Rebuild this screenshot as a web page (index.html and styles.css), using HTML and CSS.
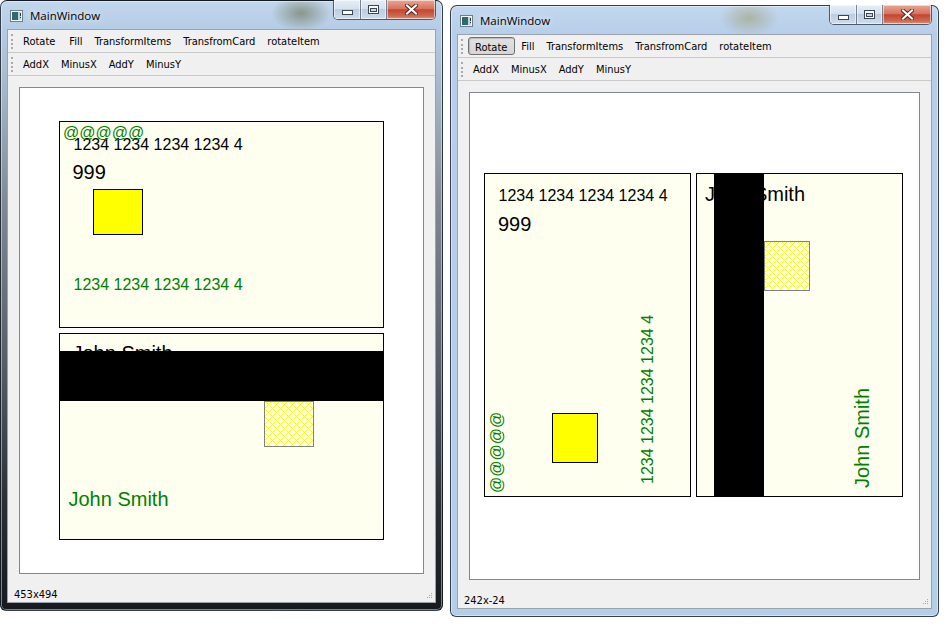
FILE: index.html
```html
<!DOCTYPE html>
<html>
<head>
<meta charset="utf-8">
<title>MainWindow</title>
<link rel="stylesheet" href="styles.css">
</head>
<body>
<div class="win win-left">
  <div class="titlebar">
    <svg class="wicon" width="13" height="12" viewBox="0 0 13 12"><rect x="0.5" y="0.5" width="12" height="11" fill="#f4f6f8" stroke="#6f7f8f"/><rect x="2" y="2" width="6" height="8" fill="#2f6b6a"/><rect x="8" y="2" width="3" height="8" fill="#b9d3e6"/><rect x="10" y="3" width="1" height="3" fill="#333"/><rect x="10" y="7" width="1" height="1" fill="#333"/></svg>
    <span class="title">MainWindow</span>
    <div class="caps">
      <span class="cap cap-min"><svg width="11" height="5" viewBox="0 0 11 5"><rect x="0.5" y="0.5" width="10" height="4" fill="#fff" stroke="#3a4656"/></svg></span>
      <span class="cap cap-max"><svg width="11" height="9" viewBox="0 0 11 9"><rect x="0.5" y="0.5" width="10" height="8" fill="#fff" stroke="#3a4656"/><rect x="2.5" y="3.5" width="6" height="3" fill="#c9d6e4" stroke="#3a4656"/></svg></span>
      <span class="cap cap-close"><svg width="13" height="11" viewBox="0 0 13 11"><path d="M2 1.5L11 9.5M11 1.5L2 9.5" stroke="#5a2a24" stroke-width="4" stroke-linecap="square"/><path d="M2 1.5L11 9.5M11 1.5L2 9.5" stroke="#fff" stroke-width="2" stroke-linecap="square"/></svg></span>
    </div>
  </div>
  <div class="client">
    <div class="toolbar"><span class="grip"></span><span class="tbtn wide">Rotate</span><span class="tbtn">Fill</span><span class="tbtn">TransformItems</span><span class="tbtn">TransfromCard</span><span class="tbtn">rotateItem</span></div>
    <div class="toolbar"><span class="grip"></span><span class="tbtn">AddX</span><span class="tbtn">MinusX</span><span class="tbtn">AddY</span><span class="tbtn">MinusY</span></div>
    <div class="central">
      <div class="view">
        <div class="card land card-l1">
          <span class="txt n16 num1">1234 1234 1234 1234 4</span>
          <span class="txt n20 cvv">999</span>
          <span class="chip chip-l"></span>
          <span class="txt n16 green num2">1234 1234 1234 1234 4</span>
          <span class="txt n16 green at">@@@@@</span>
        </div>
        <div class="card land card-l2">
          <span class="txt n20 name">John Smith</span>
          <span class="strip strip-l"></span>
          <span class="hatch hatch-l"><svg width="100%" height="100%"><defs><pattern id="dc1" width="8" height="8" patternUnits="userSpaceOnUse"><path d="M1 0h1v1H1zM5 0h1v1H5zM2 1h1v1H2zM4 1h1v1H4zM3 2h1v1H3zM2 3h1v1H2zM4 3h1v1H4zM1 4h1v1H1zM5 4h1v1H5zM0 5h1v1H0zM6 5h1v1H6zM7 6h1v1H7zM0 7h1v1H0zM6 7h1v1H6z" fill="#ffff00"/></pattern></defs><rect width="100%" height="100%" fill="url(#dc1)"/></svg></span>
          <span class="txt n20 green gname">John Smith</span>
        </div>
      </div>
    </div>
    <div class="status"><span class="stext">453x494</span><svg class="sgrip" width="7" height="7" viewBox="0 0 7 7"><g fill="#a8a8a8"><rect x="5" y="0" width="1" height="1"/><rect x="3" y="2" width="1" height="1"/><rect x="5" y="2" width="1" height="1"/><rect x="1" y="4" width="1" height="1"/><rect x="3" y="4" width="1" height="1"/><rect x="5" y="4" width="1" height="1"/></g></svg></div>
  </div>
</div>

<div class="win win-right">
  <div class="titlebar">
    <svg class="wicon" width="13" height="12" viewBox="0 0 13 12"><rect x="0.5" y="0.5" width="12" height="11" fill="#f4f6f8" stroke="#6f7f8f"/><rect x="2" y="2" width="6" height="8" fill="#2f6b6a"/><rect x="8" y="2" width="3" height="8" fill="#b9d3e6"/><rect x="10" y="3" width="1" height="3" fill="#333"/><rect x="10" y="7" width="1" height="1" fill="#333"/></svg>
    <span class="title">MainWindow</span>
    <div class="caps">
      <span class="cap cap-min"><svg width="11" height="5" viewBox="0 0 11 5"><rect x="0.5" y="0.5" width="10" height="4" fill="#fff" stroke="#3a4656"/></svg></span>
      <span class="cap cap-max"><svg width="11" height="9" viewBox="0 0 11 9"><rect x="0.5" y="0.5" width="10" height="8" fill="#fff" stroke="#3a4656"/><rect x="2.5" y="3.5" width="6" height="3" fill="#c9d6e4" stroke="#3a4656"/></svg></span>
      <span class="cap cap-close"><svg width="13" height="11" viewBox="0 0 13 11"><path d="M2 1.5L11 9.5M11 1.5L2 9.5" stroke="#5a2a24" stroke-width="4" stroke-linecap="square"/><path d="M2 1.5L11 9.5M11 1.5L2 9.5" stroke="#fff" stroke-width="2" stroke-linecap="square"/></svg></span>
    </div>
  </div>
  <div class="client">
    <div class="toolbar"><span class="grip"></span><span class="tbtn wide pressed">Rotate</span><span class="tbtn">Fill</span><span class="tbtn">TransformItems</span><span class="tbtn">TransfromCard</span><span class="tbtn">rotateItem</span></div>
    <div class="toolbar"><span class="grip"></span><span class="tbtn">AddX</span><span class="tbtn">MinusX</span><span class="tbtn">AddY</span><span class="tbtn">MinusY</span></div>
    <div class="central">
      <div class="view">
        <div class="card port card-r1">
          <span class="txt n16 num1">1234 1234 1234 1234 4</span>
          <span class="txt n20 cvv">999</span>
          <span class="chip chip-r"></span>
          <span class="txt n16 green rot rnum2">1234 1234 1234 1234 4</span>
          <span class="txt n16 green rot rat">@@@@@</span>
        </div>
        <div class="card port card-r2">
          <span class="txt n20 rname">John Smith</span>
          <span class="strip strip-r"></span>
          <span class="hatch hatch-r"><svg width="100%" height="100%"><defs><pattern id="dc2" width="8" height="8" patternUnits="userSpaceOnUse"><path d="M1 0h1v1H1zM5 0h1v1H5zM2 1h1v1H2zM4 1h1v1H4zM3 2h1v1H3zM2 3h1v1H2zM4 3h1v1H4zM1 4h1v1H1zM5 4h1v1H5zM0 5h1v1H0zM6 5h1v1H6zM7 6h1v1H7zM0 7h1v1H0zM6 7h1v1H6z" fill="#ffff00"/></pattern></defs><rect width="100%" height="100%" fill="url(#dc2)"/></svg></span>
          <span class="txt n20 green rot rgname">John Smith</span>
        </div>
      </div>
    </div>
    <div class="status"><span class="stext">242x-24</span><svg class="sgrip" width="7" height="7" viewBox="0 0 7 7"><g fill="#a8a8a8"><rect x="5" y="0" width="1" height="1"/><rect x="3" y="2" width="1" height="1"/><rect x="5" y="2" width="1" height="1"/><rect x="1" y="4" width="1" height="1"/><rect x="3" y="4" width="1" height="1"/><rect x="5" y="4" width="1" height="1"/></g></svg></div>
  </div>
</div>
</body>
</html>
```

FILE: styles.css
```css
* { box-sizing: border-box; }
html, body { margin: 0; padding: 0; }
body {
  width: 948px;
  height: 635px;
  overflow: hidden;
  position: relative;
  background: #ffffff;
  font-family: "DejaVu Sans Condensed", "DejaVu Sans", sans-serif;
  font-size: 11px;
  color: #000;
}

/* ---------- windows ---------- */
.win {
  position: absolute;
  display: flex;
  flex-direction: column;
  padding: 0 6px 7px 6px;
  border: 1px solid rgba(18, 26, 38, 0.8);
  border-radius: 7px 7px 6px 6px;
  box-shadow: inset 0 0 0 1px rgba(255, 255, 255, 0.45);
}
.win-left {
  left: 0;
  top: 0;
  width: 443px;
  height: 611px;
  background:
    radial-gradient(ellipse 30px 18px at 300px 12px, rgba(95, 100, 60, 0.55), rgba(95, 100, 60, 0)),
    linear-gradient(180deg, #c2d7ed 0, #b5cce6 28px, #a4b6c9 90px, #7f8a96 200px, #565e68 360px, #2b3036 500px, #16191d 100%);
}
.win-right {
  left: 450px;
  top: 5px;
  width: 489px;
  height: 612px;
  background:
    radial-gradient(ellipse 30px 18px at 298px 12px, rgba(150, 140, 80, 0.45), rgba(150, 140, 80, 0)),
    linear-gradient(180deg, #c3d8ef 0, #b6cee9 28px, #b4cde9 100%);
}

.titlebar {
  position: relative;
  height: 28px;
  display: flex;
  align-items: center;
  flex: none;
}
.wicon { margin-left: 3px; margin-top: 1px; flex: none; }
.title {
  margin-left: 7px;
  font-family: "Open Sans", "Noto Sans", sans-serif;
  font-size: 11.5px;
  color: #000;
  text-shadow: 0 0 6px rgba(255, 255, 255, 0.9);
}

.caps {
  position: absolute;
  top: -1px;
  right: 0;
  height: 20px;
  display: flex;
  border: 1px solid rgba(40, 50, 66, 0.75);
  border-top: none;
  border-radius: 0 0 5px 5px;
  overflow: hidden;
}
.cap {
  display: flex;
  align-items: center;
  justify-content: center;
  height: 100%;
  box-shadow: inset 0 0 0 1px rgba(255, 255, 255, 0.55);
}
.cap-min, .cap-max {
  background: linear-gradient(180deg, #e6eef7 0, #d5e1ee 45%, #bccde1 50%, #cfdcea 100%);
  border-right: 1px solid rgba(40, 50, 66, 0.55);
}
.cap-min { width: 27px; }
.cap-min svg { margin-top: 6px; }
.cap-max { width: 26px; }
.cap-close {
  width: 48px;
  background: linear-gradient(180deg, #e9a797 0, #d8735e 45%, #c24630 52%, #cf6a52 85%, #e39a80 100%);
}

/* ---------- client ---------- */
.client {
  flex: 1;
  display: flex;
  flex-direction: column;
  background: #f0f0f0;
  border: 1px solid #9aa2ab;
}
.toolbar {
  height: 23px;
  flex: none;
  display: flex;
  align-items: center;
  padding-top: 2px;
  border-bottom: 1px solid #c9c9c9;
}
.grip {
  width: 2px;
  height: 15px;
  margin: -2px 4px 0 3px;
  border-left: 2px dotted #a9a9a9;
}
.tbtn {
  height: 18px;
  line-height: 18px;
  padding: 0 6px;
  white-space: nowrap;
  color: #000;
}
.tbtn.wide { padding-right: 8px; }
.tbtn.pressed {
  margin-left: 1px;
  padding: 0 7px 0 6px;
  border: 1px solid #707070;
  border-radius: 3px;
  line-height: 17px;
  padding-top: 1px;
  margin-top: -2px;
  background: linear-gradient(180deg, #e2e2e2 0, #d6d6d6 100%);
  box-shadow: inset 1px 1px 1px rgba(0, 0, 0, 0.18);
}

.central {
  flex: 1;
  display: flex;
  padding: 11px 11px 6px 11px;
}
.view {
  flex: 1;
  position: relative;
  background: #ffffff;
  border: 1px solid #828790;
  overflow: hidden;
}

.status {
  height: 22px;
  flex: none;
  display: flex;
  align-items: center;
  padding: 6px 0 0 6px;
  position: relative;
}
.sgrip {
  position: absolute;
  right: 2px;
  bottom: 2px;
}

/* ---------- scene (free canvas) ---------- */
.card {
  position: absolute;
  background: #fffff0;
  border: 1px solid #000;
}
.land { width: 325px; height: 207px; }
.port { width: 207px; height: 324px; }
.card-l1 { left: 39px; top: 33px; }
.card-l2 { left: 39px; top: 245px; }
.card-r1 { left: 14px; top: 80px; }
.card-r2 { left: 226px; top: 80px; }

.txt {
  position: absolute;
  white-space: nowrap;
  line-height: 1;
  font-family: "Liberation Sans", Arial, sans-serif;
  color: #000;
}
.n16 { font-size: 16px; }
.n20 { font-size: 20px; }
.green { color: #008000; }
.rot { transform-origin: 0 0; transform: rotate(-90deg); }

.num1 { left: 13.5px; top: 14.5px; }
.cvv { left: 12.5px; top: 39.5px; }
.num2 { left: 13.5px; top: 154.5px; }
.at { left: 3px; top: 3px; }
.name { left: 12.5px; top: 8.5px; }
.gname { left: 8.5px; top: 155px; }

.card-r1 .num1 { left: 13.5px; top: 14px; }
.card-r1 .cvv { left: 13px; top: 40px; }
.rnum2 { left: 154.5px; top: 309.7px; }
.rat { left: 3.5px; top: 319px; }
.rname { left: 8px; top: 10px; }
.rgname { left: 154.8px; top: 314.2px; }

.chip {
  position: absolute;
  background: #ffff00;
  border: 1px solid #000;
}
.chip-l { left: 33px; top: 67px; width: 50px; height: 46px; }
.chip-r { left: 67px; top: 239px; width: 46px; height: 50px; }

.strip { position: absolute; background: #000; }
.strip-l { left: -1px; top: 17px; width: 325px; height: 50px; }
.strip-r { left: 17px; top: -1px; width: 50px; height: 324px; }

.hatch {
  position: absolute;
  border: 1px solid #808080;
}
.hatch svg { display: block; }
.hatch-l { left: 204px; top: 67px; width: 50px; height: 46px; }
.hatch-r { left: 67px; top: 67px; width: 46px; height: 50px; }
```
